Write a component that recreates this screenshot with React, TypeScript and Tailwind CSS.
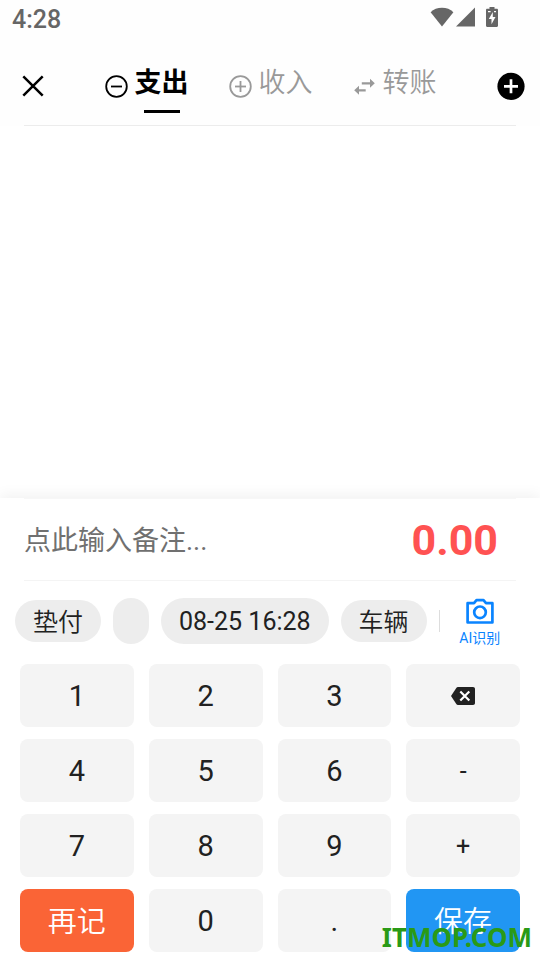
import React, { useState } from 'react';

type TabId = 'expense' | 'income' | 'transfer';

const CircleIcon = ({ plus }: { plus?: boolean }) => (
  <svg className="w-6 h-6" viewBox="0 0 24 24" fill="none" stroke="currentColor" strokeWidth={1.8}>
    <circle cx="12.500" cy="12.500" r="10.300" />
    <path d="M7 12.500h11" />
    {plus && <path d="M12.500 7v11" />}
  </svg>
);

const TransferIcon = () => (
  <svg className="w-6 h-6" viewBox="0 0 24 24" fill="currentColor">
    <path d="M7 11.800 2.200 16.300 7 20.800v-3.400h6.700v-2.200H7zM22.800 9.300 18 4.800v3.400H9.800v2.200H18v3.400z" />
  </svg>
);

const BackspaceIcon = () => (
  <svg className="w-6 h-[18px]" viewBox="0 0 24 18">
    <path d="M7 0h15c1.200 0 2 .8 2 2v14c0 1.200-.8 2-2 2H7c-.8 0-1.300-.3-1.700-.9L0 9 5.300.9C5.700.3 6.200 0 7 0z" fill="currentColor" />
    <path d="m9.300 4.500 9 9M18.300 4.500l-9 9" stroke="#fff" strokeWidth={2.2} />
  </svg>
);

const tabs: { id: TabId; name: string; icon: React.ReactNode }[] = [
  { id: 'expense', name: '支出', icon: <CircleIcon /> },
  { id: 'income', name: '收入', icon: <CircleIcon plus /> },
  { id: 'transfer', name: '转账', icon: <TransferIcon /> },
];

const keys = ['1', '2', '3', 'del', '4', '5', '6', '-', '7', '8', '9', '+', '再记', '0', '.', '保存'];

const keyStyle = (key: string) => {
  switch (key) {
    case '再记':
      return 'pt-1 text-[29px] font-[350] bg-[#fa6436] text-white';
    case '保存':
      return 'pt-1 text-[29px] font-[350] bg-[#2196f3] text-white';
    case '-':
    case '+':
      return 'pt-0.5 text-[25px] bg-[#f4f4f4] text-[#212121]';
    case 'del':
      return 'bg-[#f4f4f4] text-[#212121]';
    default:
      return 'pt-0.5 text-[29px] bg-[#f4f4f4] text-[#212121]';
  }
};

const StatusBar = () => (
  <div className="h-[38px] pl-3 pr-10 flex items-center justify-between text-[#666]">
    <span className="pt-0.5 text-[25px] leading-8 font-medium">4:28</span>
    <div className="flex items-center pb-1">
      <svg className="w-6 h-5" viewBox="0 0 24 20" fill="currentColor">
        <path d="M12 19.500.6 5.200C3.600 2.300 7.500.800 12 .8s8.400 1.500 11.400 4.400z" />
      </svg>
      <svg className="w-5 h-5 ml-0.5" viewBox="0 0 20 20" fill="currentColor">
        <path d="M0 19.500 19 .5v19z" />
      </svg>
      <svg className="w-3 h-5 ml-2.5 mr-0.5" viewBox="0 0 12 20" fill="currentColor">
        <path
          fillRule="evenodd"
          d="M3.500 0h5v1.800h2.300c.7 0 1.200.5 1.200 1.200v15.800c0 .7-.5 1.200-1.200 1.200H1.200C.5 20 0 19.500 0 18.800V3c0-.7.5-1.200 1.200-1.200h2.300zM6.800 5 2.800 12h2.700v5.200L9.500 10H6.800zM2 4v1.300h2.600V4zM8 4v1.300h2V4z"
        />
      </svg>
    </div>
  </div>
);

export default function App() {
  const [active, setActive] = useState<TabId>('expense');
  const [remark, setRemark] = useState('');

  return (
    <div className="min-h-screen flex flex-col bg-white font-['Roboto','Noto_Sans_CJK_SC',sans-serif]">
      <header className="bg-[#fefefe]">
        <StatusBar />
        <div className="h-[87px] pt-2 flex items-center">
          <button className="w-16 h-12 pl-0.5 flex items-center justify-center" aria-label="关闭">
            <svg className="w-6 h-6" viewBox="0 0 24 24" fill="none" stroke="#000" strokeWidth={2.5}>
              <path d="M2.300 2.300l19.400 19.400M21.700 2.300 2.300 21.700" />
            </svg>
          </button>
          <nav className="flex-1 flex justify-center gap-[39px]">
            {tabs.map((tab) => (
              <button
                key={tab.id}
                onClick={() => setActive(tab.id)}
                className={`flex items-center gap-[7px] ${
                  active === tab.id ? 'text-black font-bold' : 'text-[#999] font-[350]'
                }`}
              >
                {tab.icon}
                <span className="pt-[5px] flex flex-col items-center">
                  <span className="text-[27px] leading-10">{tab.name}</span>
                  <span className={`w-9 h-[3px] mt-[7px] ${active === tab.id ? 'bg-black' : 'bg-transparent'}`} />
                </span>
              </button>
            ))}
          </nav>
          <button className="w-16 h-12 pl-1.5 flex items-center justify-center" aria-label="添加">
            <svg className="w-7 h-7" viewBox="0 0 28 28">
              <circle cx="14" cy="14.300" r="13.600" fill="#000" />
              <path d="M14 7.300v14M7 14.300h14" stroke="#fff" strokeWidth={2.7} />
            </svg>
          </button>
        </div>
        <div className="h-px mx-6 bg-[#ececec]" />
      </header>

      <main className="flex-1" />

      <section className="bg-white shadow-[0_-4px_12px_rgba(0,0,0,0.05)]">
        <div className="h-px mx-6 bg-[#f7f7f7]" />
        <div className="h-[81px] pl-6 pr-[42px] flex items-center justify-between">
          <input
            aria-label="备注"
            className="flex-1 min-w-0 pt-0.5 text-[27px] leading-10 text-[#707070] placeholder:text-[#707070] outline-none"
            placeholder="点此输入备注..."
            value={remark}
            onChange={(e) => setRemark(e.target.value)}
          />
          <output className="text-[43px] leading-[48px] font-bold text-[#ff5252]">0.00</output>
        </div>
        <div className="h-px mx-6 bg-[#f4f4f4]" />

        <div className="h-[83px] pl-[15px] pr-5 pb-[3px] flex items-center gap-3 text-[25px] text-[#212121]">
          <button className="h-[42px] px-[18px] pt-[3px] font-[350] rounded-full bg-[#ededed]">垫付</button>
          <button className="w-9 h-[46px] rounded-full bg-[#ededed]" aria-label="账户" />
          <button className="h-[46px] px-[18px] pt-0.5 rounded-full bg-[#ededed]">08-25 16:28</button>
          <button className="h-[42px] px-[18px] pt-[3px] font-[350] rounded-full bg-[#ededed]">车辆</button>
          <div className="flex-1 flex items-center">
            <span className="w-px h-[22px] bg-[#ddd]" />
            <button className="flex-1 pt-1 flex flex-col items-center gap-0.5 text-[#0a84ff]">
              <svg className="w-7 h-7" viewBox="0 0 28 28" fill="none" stroke="currentColor" strokeWidth={2.7} strokeLinejoin="round">
                <path d="M1.600 5.200h6.400L10.500 2.200h7l2.500 3h6.400v19.300H1.600z" />
                <circle cx="14" cy="14.300" r="5.800" />
              </svg>
              <span className="text-sm leading-5">AI识别</span>
            </button>
          </div>
        </div>

        <div className="relative px-5 pb-2">
          <div className="grid grid-cols-4 gap-x-[15px] gap-y-3">
            {keys.map((key) => (
              <button
                key={key}
                aria-label={key === 'del' ? '删除' : undefined}
                className={`h-[63px] rounded-lg flex items-center justify-center ${keyStyle(key)}`}
              >
                {key === 'del' ? <BackspaceIcon /> : key}
              </button>
            ))}
          </div>
          <div className="absolute right-2 bottom-[5px] text-[26px] leading-9 font-bold text-[#2a9a16] font-['Noto_Sans',sans-serif] pointer-events-none">
            ITMOP.COM
          </div>
        </div>
      </section>
    </div>
  );
}
